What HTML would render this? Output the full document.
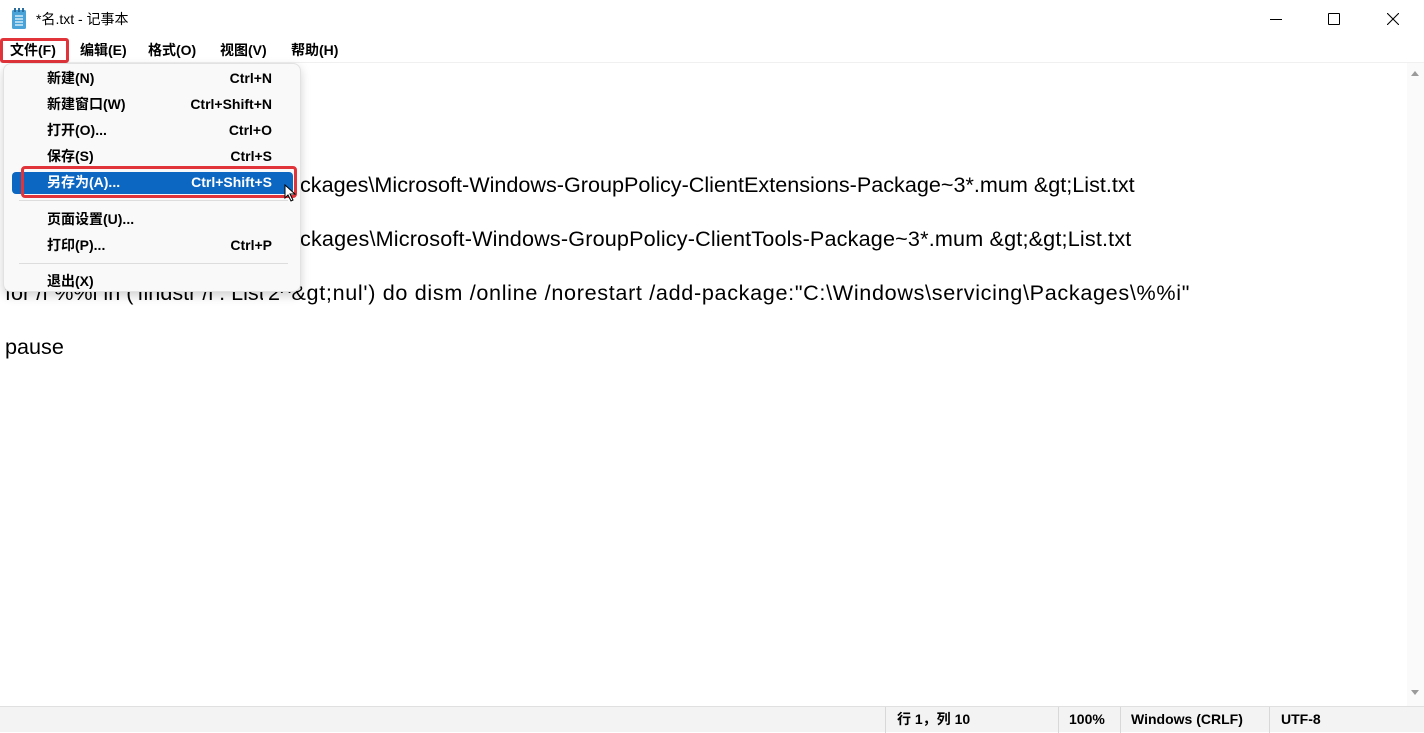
<!DOCTYPE html>
<html><head><meta charset="utf-8"><style>
*{margin:0;padding:0;box-sizing:border-box}
body{width:1424px;height:732px;overflow:hidden;background:#fff;font-family:"Liberation Sans","Noto Sans CJK SC",sans-serif;position:relative;color:#000}
.abs{position:absolute;white-space:nowrap}
.title{top:0;left:0;width:1424px;height:38px;background:#fff}
.menubar{top:38px;left:0;width:1424px;height:25px;font-size:14px;font-weight:bold;border-bottom:1px solid #f0f0f0}
.menubar span{position:absolute;top:3px;line-height:18px}
.txt{font-size:21.6px;line-height:27px}
.menu{left:3px;top:63px;width:298px;height:229px;background:#f9f9f9;border:1px solid #e2e2e2;border-radius:8px;box-shadow:0 4px 10px rgba(0,0,0,.18);font-size:14px;font-weight:bold}
.mi,.sc{position:absolute;line-height:18px}
.mi{left:43px}
.sc{right:28px}
.sep{position:absolute;left:15px;right:12px;height:1px;background:#ddd}
.status{top:706px;left:0;width:1424px;height:26px;background:#f3f3f3;border-top:1px solid #e0e0e0;font-size:14px;font-weight:bold}
.status span{position:absolute;top:3px;line-height:18px}
.vs{position:absolute;top:0;width:1px;height:26px;background:#d8d8d8}
</style></head><body>
<div class="abs title">
 <svg class="abs" style="left:11px;top:8px" width="16" height="22" viewBox="0 0 16 22"><rect x="1" y="2" width="14" height="19" rx="1.5" fill="#4aa3d8"/><rect x="3" y="0" width="2" height="4" fill="#2b6ea0"/><rect x="7" y="0" width="2" height="4" fill="#2b6ea0"/><rect x="11" y="0" width="2" height="4" fill="#2b6ea0"/><g stroke="#e8f4fb" stroke-width="1.3"><line x1="4" y1="8" x2="12" y2="8"/><line x1="4" y1="11" x2="12" y2="11"/><line x1="4" y1="14" x2="12" y2="14"/><line x1="4" y1="17" x2="12" y2="17"/></g></svg>
 <span class="abs" style="left:36px;top:9px;font-size:14px">*名.txt - 记事本</span>
 <div class="abs" style="left:1270px;top:19px;width:12px;height:1px;background:#000"></div>
 <div class="abs" style="left:1328px;top:13px;width:12px;height:12px;border:1px solid #000;border-radius:1px"></div>
 <svg class="abs" style="left:1387px;top:13px" width="12" height="12"><path d="M0 0L12 12M12 0L0 12" stroke="#000" stroke-width="1.1"/></svg>
</div>
<div class="abs menubar">
 <span style="left:10px">文件(F)</span><span style="left:80px">编辑(E)</span><span style="left:148px">格式(O)</span><span style="left:220px">视图(V)</span><span style="left:291px">帮助(H)</span>
</div>
<div class="abs" style="left:0;top:38px;width:69px;height:25px;border:3px solid #e0343a;border-radius:3px"></div>
<div class="abs txt" style="left:5px;top:63px">@echo off</div>
<div class="abs txt" style="left:5px;top:117px">pushd "%~dp0"</div>
<div class="abs txt" style="left:300px;top:171px">ckages\Microsoft-Windows-GroupPolicy-ClientExtensions-Package~3*.mum &amp;gt;List.txt</div>
<div class="abs txt" style="left:300px;top:225px;letter-spacing:0.17px">ckages\Microsoft-Windows-GroupPolicy-ClientTools-Package~3*.mum &amp;gt;&amp;gt;List.txt</div>
<div class="abs txt" style="left:5px;top:279px;width:258px;overflow:hidden">for /f %%i in ('findstr /i . List.txt</div>
<div class="abs txt" style="left:268px;top:279px;letter-spacing:0.67px">2^&amp;gt;nul') do dism /online /norestart /add-package:"C:\Windows\servicing\Packages\%%i"</div>
<div class="abs txt" style="left:5px;top:333px">pause</div>
<div class="abs menu">
 <span class="mi" style="top:5px">新建(N)</span><span class="sc" style="top:5px">Ctrl+N</span>
 <span class="mi" style="top:31px">新建窗口(W)</span><span class="sc" style="top:31px">Ctrl+Shift+N</span>
 <span class="mi" style="top:57px">打开(O)...</span><span class="sc" style="top:57px">Ctrl+O</span>
 <span class="mi" style="top:83px">保存(S)</span><span class="sc" style="top:83px">Ctrl+S</span>
 <div style="position:absolute;left:8px;top:108px;width:281px;height:22px;background:#0b67c2;border-radius:4px"></div>
 <span class="mi" style="top:109px;color:#fff">另存为(A)...</span><span class="sc" style="top:109px;color:#fff">Ctrl+Shift+S</span>
 <div class="sep" style="top:136px"></div>
 <span class="mi" style="top:146px">页面设置(U)...</span>
 <span class="mi" style="top:172px">打印(P)...</span><span class="sc" style="top:172px">Ctrl+P</span>
 <div class="sep" style="top:199px"></div>
 <span class="mi" style="top:208px">退出(X)</span>
</div>
<div class="abs" style="left:21px;top:166px;width:276px;height:32px;border:3px solid #e0343a;border-radius:4px"></div>
<svg class="abs" style="left:284px;top:184px" width="12" height="18"><path d="M1 1L1 14L4 11L7 17L9 16L6 10L11 10Z" fill="#fff" stroke="#000"/></svg>
<div class="abs" style="left:1407px;top:63px;width:17px;height:643px;background:#fafafa"></div>
<svg class="abs" style="left:1409px;top:68px" width="12" height="10"><path d="M2 8L6 3L10 8Z" fill="#9a9a9a"/></svg>
<svg class="abs" style="left:1409px;top:688px" width="12" height="10"><path d="M2 2L6 7L10 2Z" fill="#9a9a9a"/></svg>
<div class="abs status">
 <div class="vs" style="left:885px"></div><span style="left:897px">行 1，列 10</span>
 <div class="vs" style="left:1058px"></div><span style="left:1069px">100%</span>
 <div class="vs" style="left:1120px"></div><span style="left:1131px">Windows (CRLF)</span>
 <div class="vs" style="left:1269px"></div><span style="left:1281px">UTF-8</span>
</div>
</body></html>
